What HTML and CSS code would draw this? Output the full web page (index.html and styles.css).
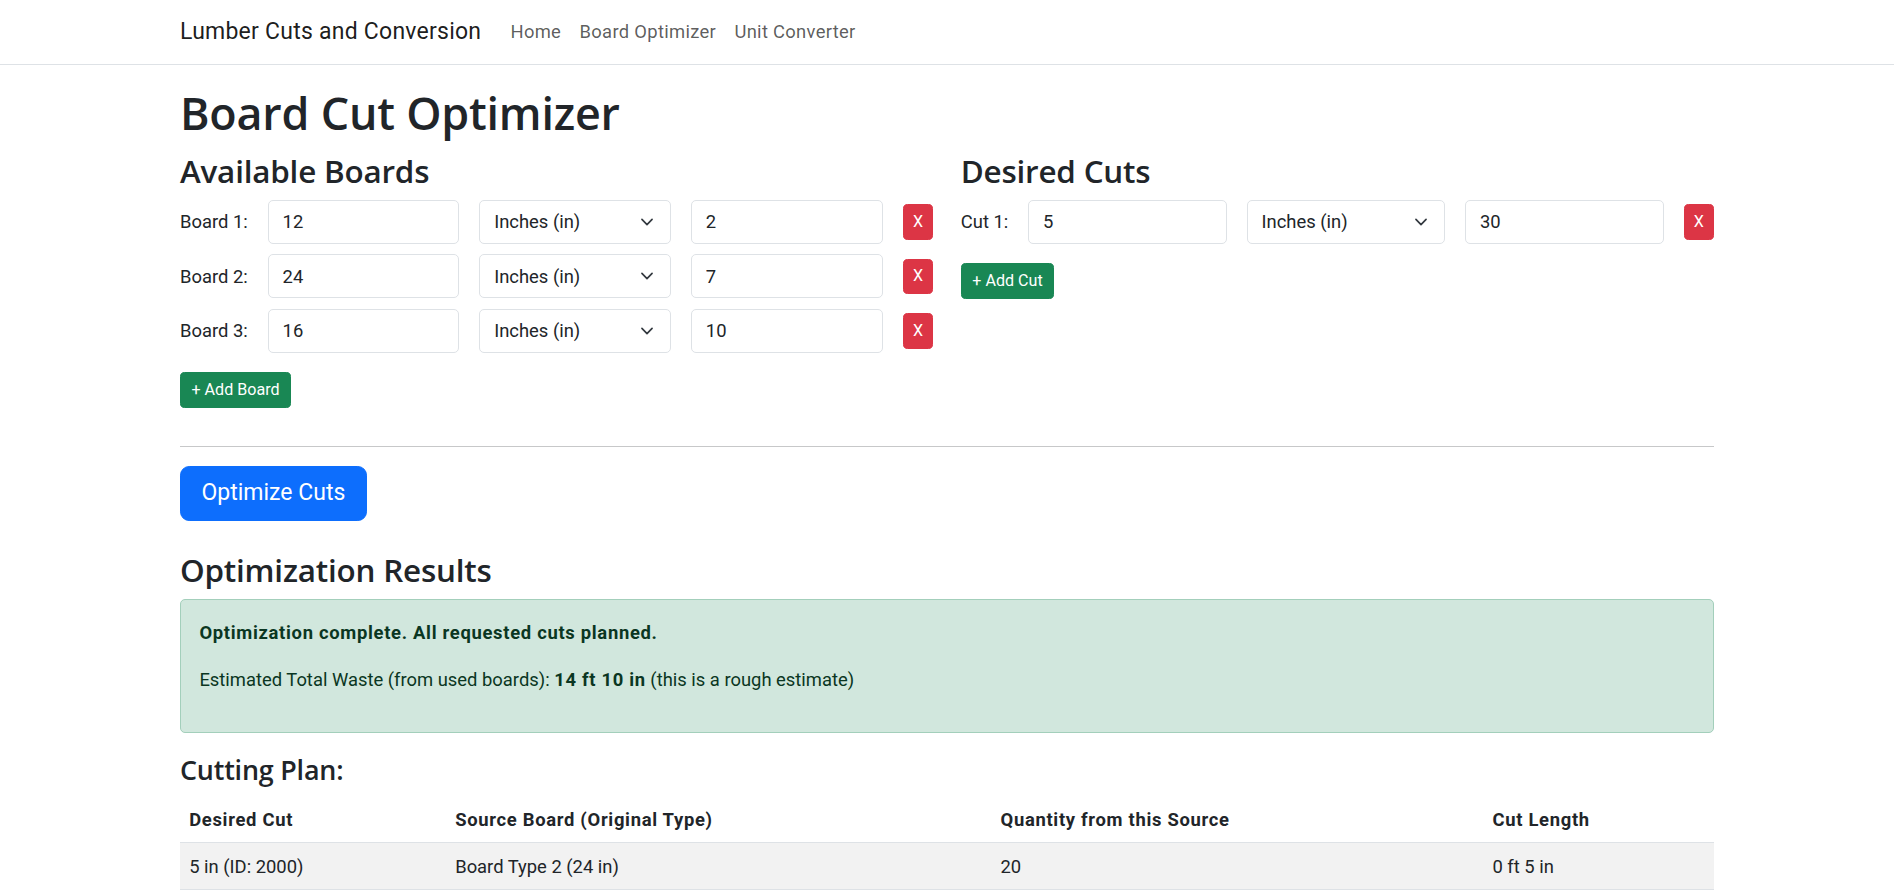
FILE: index.html
```html
<!DOCTYPE html>
<html lang="en">
<head>
<meta charset="utf-8">
<title>Board Cut Optimizer</title>
<link rel="stylesheet" href="styles.css">
</head>
<body>
<nav class="navbar">
  <div class="navbar-inner">
    <a class="brand" href="#">Lumber Cuts and Conversion</a>
    <ul class="nav-links">
      <li><a href="#">Home</a></li>
      <li><a href="#">Board Optimizer</a></li>
      <li><a href="#">Unit Converter</a></li>
    </ul>
  </div>
</nav>

<main class="page">
  <h1 class="page-title">Board Cut Optimizer</h1>

  <div class="columns">
    <section class="column">
      <h3 class="section-title">Available Boards</h3>
      <div class="entry-row">
        <label class="entry-label">Board 1:</label>
        <input class="field" type="text" value="12">
        <select class="field select"><option>Inches (in)</option></select>
        <input class="field" type="text" value="2">
        <button class="btn btn-sm btn-danger">X</button>
      </div>
      <div class="entry-row">
        <label class="entry-label">Board 2:</label>
        <input class="field" type="text" value="24">
        <select class="field select"><option>Inches (in)</option></select>
        <input class="field" type="text" value="7">
        <button class="btn btn-sm btn-danger">X</button>
      </div>
      <div class="entry-row">
        <label class="entry-label">Board 3:</label>
        <input class="field" type="text" value="16">
        <select class="field select"><option>Inches (in)</option></select>
        <input class="field" type="text" value="10">
        <button class="btn btn-sm btn-danger">X</button>
      </div>
      <button class="btn btn-sm btn-success btn-add">+ Add Board</button>
    </section>

    <section class="column">
      <h3 class="section-title">Desired Cuts</h3>
      <div class="entry-row">
        <label class="entry-label">Cut 1:</label>
        <input class="field" type="text" value="5">
        <select class="field select"><option>Inches (in)</option></select>
        <input class="field" type="text" value="30">
        <button class="btn btn-sm btn-danger">X</button>
      </div>
      <button class="btn btn-sm btn-success btn-add">+ Add Cut</button>
    </section>
  </div>

  <hr class="divider">

  <button class="btn btn-lg btn-primary">Optimize Cuts</button>

  <div class="results">
    <h3 class="section-title">Optimization Results</h3>
    <div class="alert">
      <p><strong>Optimization complete. All requested cuts planned.</strong></p>
      <p>Estimated Total Waste (from used boards): <strong>14 ft 10 in</strong> (this is a rough estimate)</p>
    </div>

    <h4 class="plan-title">Cutting Plan:</h4>
    <table class="plan-table">
      <colgroup>
        <col class="col-cut">
        <col class="col-source">
        <col class="col-qty">
        <col class="col-len">
      </colgroup>
      <thead>
        <tr>
          <th>Desired Cut</th>
          <th>Source Board (Original Type)</th>
          <th>Quantity from this Source</th>
          <th>Cut Length</th>
        </tr>
      </thead>
      <tbody>
        <tr class="striped">
          <td>5 in (ID: 2000)</td>
          <td>Board Type 2 (24 in)</td>
          <td>20</td>
          <td>0 ft 5 in</td>
        </tr>
      </tbody>
    </table>
  </div>
</main>
</body>
</html>
```

FILE: styles.css
```css
* {
  box-sizing: border-box;
}

body {
  margin: 0;
  font-family: Roboto, "Segoe UI", "Liberation Sans", sans-serif;
  font-size: 18.4px;
  line-height: 1.5;
  color: #212529;
  background: #fff;
}

strong {
  font-weight: 700;
  letter-spacing: 0.7px;
}

/* Navbar */
.navbar {
  background: #fff;
  border-bottom: 1px solid #dee2e6;
}

.navbar-inner {
  width: 1534px;
  margin: 0 auto;
  height: 64px;
  display: flex;
  align-items: center;
}

.brand {
  font-size: 23px;
  line-height: 1.5;
  letter-spacing: 0.24px;
  color: rgba(0, 0, 0, 0.9);
  text-decoration: none;
  margin-right: 20px;
}

.nav-links {
  display: flex;
  list-style: none;
  margin: 0;
  padding: 0;
}

.nav-links a {
  display: block;
  padding: 9.2px;
  letter-spacing: 0.3px;
  color: rgba(0, 0, 0, 0.65);
  text-decoration: none;
}

/* Page */
.page {
  width: 1534px;
  margin: 0 auto;
  padding-top: 20.6px;
}

.page-title,
.section-title,
.plan-title {
  font-family: "Open Sans", "Segoe UI", "Noto Sans", sans-serif;
  font-weight: 600;
  line-height: 1.2;
  letter-spacing: -0.2px;
}

.page-title {
  font-size: 44.85px;
  margin: 0 0 12.5px;
}

.columns {
  display: grid;
  grid-template-columns: minmax(0, 1fr) minmax(0, 1fr);
  column-gap: 27.6px;
}

.section-title {
  font-size: 31.4px;
  margin: 0 0 10.3px;
}

.entry-row {
  display: flex;
  align-items: center;
  gap: 20px;
  margin-bottom: 10.5px;
}

.entry-label {
  white-space: nowrap;
}

.field {
  flex: 1 1 100px;
  min-width: 0;
  width: 100px;
  height: 44px;
  padding: 6.9px 13.8px;
  font: inherit;
  color: #212529;
  background-color: #fff;
  border: 1px solid #dee2e6;
  border-radius: 5px;
  outline: none;
}

.select {
  appearance: none;
  -webkit-appearance: none;
  padding-right: 42px;
  background-image: url("data:image/svg+xml,%3csvg xmlns='http://www.w3.org/2000/svg' viewBox='0 0 16 16'%3e%3cpath fill='none' stroke='%23343a40' stroke-linecap='round' stroke-linejoin='round' stroke-width='2' d='m2 5 6 6 6-6'/%3e%3c/svg%3e");
  background-repeat: no-repeat;
  background-position: right 13.8px center;
  background-size: 18.4px 13.8px;
}

/* Buttons */
.btn {
  font-family: inherit;
  line-height: 1.5;
  color: #fff;
  border: 1px solid transparent;
  cursor: pointer;
}

.btn-sm {
  font-size: 16.1px;
  padding: 4.6px 9.2px;
  border-radius: 4.6px;
}

.btn-danger {
  background: #dc3545;
  border-color: #dc3545;
}

.btn-success {
  background: #198754;
  border-color: #198754;
}

.btn-add {
  display: block;
  margin-top: 19.5px;
  padding: 4.6px 10.5px;
}

.btn-lg {
  display: block;
  font-size: 23px;
  padding: 9.6px 20.5px;
  border-radius: 9.2px;
}

.btn-primary {
  background: #0d6efd;
  border-color: #0d6efd;
}

.divider {
  border: 0;
  border-top: 1px solid #212529;
  opacity: 0.25;
  margin: 38px 0 19px;
}

/* Results */
.results {
  margin-top: 30px;
}

.alert {
  background: #d1e7dd;
  border: 1px solid #a3cfbb;
  color: #0a3622;
  border-radius: 5px;
  padding: 18.4px;
}

.alert p {
  margin: 0 0 20px;
}

.plan-title {
  font-size: 26.9px;
  margin: 20.4px 0 0;
}

.plan-table {
  width: 100%;
  margin-top: 10.3px;
  border-collapse: collapse;
  table-layout: fixed;
}

.col-cut { width: 17.34%; }
.col-source { width: 35.55%; }
.col-qty { width: 32.07%; }
.col-len { width: 15.04%; }

.plan-table th,
.plan-table td {
  padding: 9.2px;
  text-align: left;
  border-bottom: 1px solid #dee2e6;
  font-weight: 400;
}

.plan-table th {
  font-weight: 700;
  letter-spacing: 0.7px;
}

.plan-table .striped {
  background: #f2f2f2;
}
```
